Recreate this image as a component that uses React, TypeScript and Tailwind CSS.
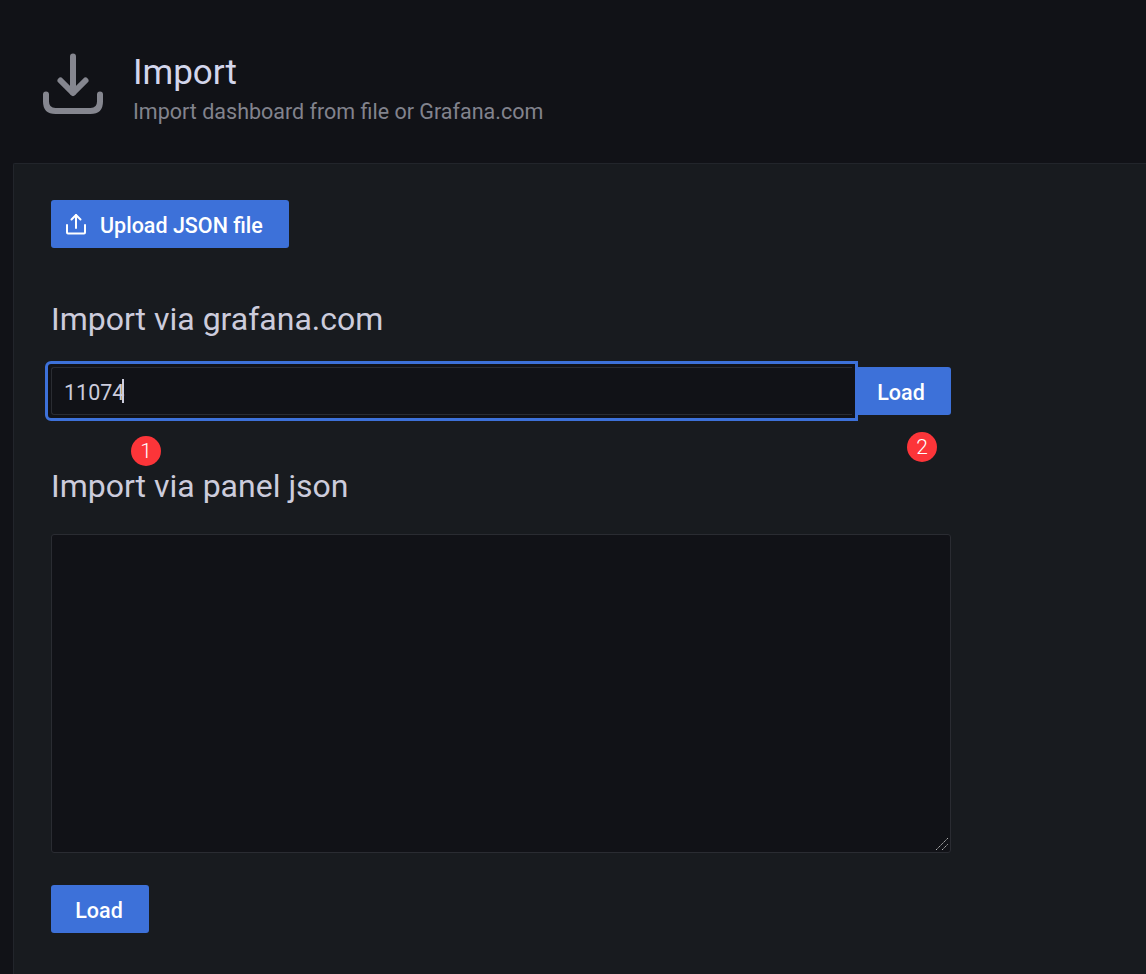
import React from 'react';

const font = "font-['Roboto',sans-serif]";

const Badge: React.FC<{ n: number; className: string }> = ({ n, className }) => (
  <span className={`absolute flex h-[30px] w-[30px] items-center justify-center rounded-full bg-[#fc3539] text-[21px] font-light leading-none text-white ${className}`}>
    {n}
  </span>
);

const App: React.FC = () => {
  return (
    <div className={`${font} h-[974px] overflow-hidden bg-[#111217] text-[#ccccdc]`}>
      <header className="flex h-[163px] items-start pl-[40px] pt-[50px]">
        <svg width="66" height="66" viewBox="0 0 66 66" fill="none" stroke="#85868f" strokeWidth="6" strokeLinecap="round" strokeLinejoin="round" className="shrink-0">
          <path d="M33 6.5V42.5" />
          <path d="M20.5 30.5L33 43L45.5 30.5" />
          <path d="M6 44.5V51.5Q6 61 15.5 61H50.5Q60 61 60 51.5V44.5" />
        </svg>
        <div className="ml-[27px]">
          <h1 className="text-[35px] font-normal leading-[46px] text-[#d3d6ec]">Import</h1>
          <p className="mt-[2px] text-[21.5px] leading-[28px] text-[#82838d]">Import dashboard from file or Grafana.com</p>
        </div>
      </header>

      <main className="relative ml-[13px] h-[811px] rounded-tl-[2px] border-l border-t border-[#22252b] bg-[#181b1f] pl-[37px] pt-[36px]">
        <button className="flex h-[48px] w-[238px] items-center rounded-[3px] bg-[#3d71d9] pl-[14px] text-[21.5px] font-medium text-white">
          <svg width="22" height="22" viewBox="0 0 22 22" fill="none" stroke="#fff" strokeWidth="2" strokeLinecap="round" strokeLinejoin="round">
            <path d="M2 12V19.5Q2 20.5 3 20.5H19Q20 20.5 20 19.5V12" />
            <path d="M11 15V2" />
            <path d="M6.5 6.5L11 2L15.5 6.5" />
          </svg>
          <span className="ml-[13px] mt-[4px]">Upload JSON file</span>
        </button>

        <h2 className="mt-[50px] text-[32px] font-normal leading-[42px] text-[#ccccdc]">Import via grafana.com</h2>

        <div className="mt-[27px] flex w-[900px]">
          <div className="relative flex h-[48px] w-[804px] items-center pl-[13px] text-[21.5px] text-[#ccccdc]">
            <div className="absolute -inset-y-[6px] -left-[6px] -right-[3px] rounded-l-[6px] border-[3px] border-[#3d71d9] bg-[#111217]" />
            <div className="absolute inset-y-0 left-0 right-[3px] rounded-l-[3px] border-y border-l border-[#2a2c32]" />
            <span className="relative mt-[4px]">11074</span>
            <span className="relative -ml-[2px] h-[24px] w-[2px] bg-[#ccccdc]" />
          </div>
          <button className="flex h-[48px] w-[96px] items-center justify-center rounded-r-[3px] bg-[#3d71d9] pr-[4px] pt-[4px] text-[21.5px] font-medium text-white">
            Load
          </button>
        </div>

        <Badge n={1} className="left-[117px] top-[272px]" />
        <Badge n={2} className="left-[893px] top-[268px]" />

        <h2 className="mt-[50px] text-[32px] font-normal leading-[42px] text-[#ccccdc]">Import via panel json</h2>

        <div className="relative mt-[27px] h-[319px] w-[900px]">
          <textarea
            readOnly
            className="block h-full w-full resize-none rounded-[3px] border border-[#2a2c32] bg-[#111217]"
          />
          <svg width="14" height="14" viewBox="0 0 14 14" fill="none" stroke="#b8b8b8" strokeWidth="1" strokeDasharray="1.5 0.7" className="absolute bottom-[2px] right-[2px]">
            <path d="M1 13L13 1" />
            <path d="M7 13L13 7" />
          </svg>
        </div>

        <button className="mt-[32px] flex h-[48px] w-[98px] items-center justify-center rounded-[3px] bg-[#3d71d9] pr-[2px] pt-[4px] text-[21.5px] font-medium text-white">
          Load
        </button>
      </main>
    </div>
  );
};

export default App;
